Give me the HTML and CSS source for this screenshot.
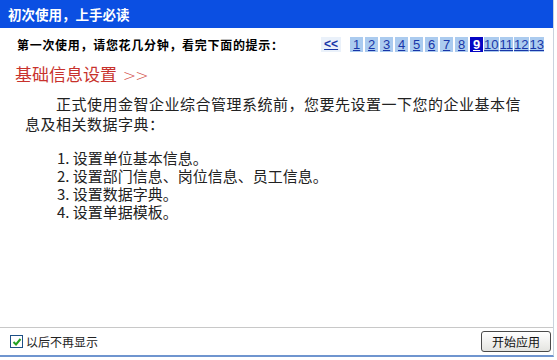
FILE: index.html
```html
<!DOCTYPE html>
<html lang="zh-CN">
  <head>
    <meta charset="UTF-8" />
    <meta name="viewport" content="width=device-width, initial-scale=1.0" />
    <title>初次使用，上手必读</title>
    <link rel="stylesheet" href="styles.css">
  </head>
  <body>
    <div class="window">
      <div class="titlebar">初次使用，上手必读</div>

      <div class="main">
        <div class="guide-row">
          <div class="guide-text">第一次使用，请您花几分钟，看完下面的提示：</div>
          <div class="pager">
            <a class="pager-prev" href="#">&lt;&lt;</a>
            <a class="page" href="#">1</a>
            <a class="page" href="#">2</a>
            <a class="page" href="#">3</a>
            <a class="page" href="#">4</a>
            <a class="page" href="#">5</a>
            <a class="page" href="#">6</a>
            <a class="page" href="#">7</a>
            <a class="page" href="#">8</a>
            <a class="page page_active" href="#">9</a>
            <a class="page page_wide" href="#">10</a>
            <a class="page page_wide" href="#">11</a>
            <a class="page page_wide" href="#">12</a>
            <a class="page page_wide" href="#">13</a>
          </div>
        </div>

        <h2 class="section-title">基础信息设置 <span class="arrows">&gt;&gt;</span></h2>

        <p class="intro">正式使用金智企业综合管理系统前，您要先设置一下您的企业基本信息及相关数据字典：</p>

        <ol class="steps">
          <li>1. 设置单位基本信息。</li>
          <li>2. 设置部门信息、岗位信息、员工信息。</li>
          <li>3. 设置数据字典。</li>
          <li>4. 设置单据模板。</li>
        </ol>
      </div>

      <div class="footer">
        <label class="check">
          <span class="check-box">
            <svg width="10" height="10" viewBox="0 0 10 10">
              <path d="M1.5 5 L4 7.5 L8.5 2" fill="none" stroke="#21a121" stroke-width="2" />
            </svg>
          </span>
          以后不再显示
        </label>
        <button class="btn-start">开始应用</button>
      </div>
    </div>
  </body>
</html>
```

FILE: styles.css
```css
body {
  margin: 0;
  background: #fff;
  font-family: "Liberation Sans", "Noto Sans CJK SC", sans-serif;
  color: #222;
}

.window {
  width: 554px;
  height: 357px;
  border-right: 1px solid #c9d3de;
  border-bottom: 2px solid #6f95cf;
  display: flex;
  flex-direction: column;
  box-sizing: border-box;
}

.titlebar {
  height: 28px;
  line-height: 28px;
  padding-left: 8px;
  background: #0b4fe2;
  color: #fff;
  font-size: 13.5px;
  font-weight: bold;
  font-family: "Noto Sans CJK SC", sans-serif;
}

.main {
  flex: 1;
}

.guide-row {
  display: flex;
  align-items: center;
  justify-content: space-between;
  height: 18px;
  margin-top: 7px;
  padding-left: 17px;
  padding-right: 9px;
}

.guide-text {
  font-family: "Noto Sans CJK SC", sans-serif;
  font-size: 12px;
  font-weight: bold;
  color: #000;
  letter-spacing: 0.7px;
}

.pager {
  display: flex;
  align-items: center;
  font-size: 13px;
  font-family: "Liberation Sans", sans-serif;
}

.pager a {
  color: #1836a8;
  text-decoration: underline;
}

.pager-prev {
  font-size: 12px;
  font-weight: bold;
  padding: 0 3px;
  margin-right: 7px;
  background: #eaf1fa;
  line-height: 15px;
}

.page {
  display: inline-block;
  min-width: 11px;
  padding: 0 1px;
  margin-left: 2px;
  line-height: 15px;
  text-align: center;
  background: #abcbef;
}

.page_wide {
  margin-left: 1px;
  padding: 0;
}

.page_active {
  background: #0606c4;
  color: #fff !important;
  font-weight: bold;
}

.section-title {
  margin: 10px 0 0 15px;
  font-family: "Noto Sans CJK SC", sans-serif;
  font-size: 17px;
  font-weight: normal;
  line-height: 22px;
  color: #c8322c;
}

.arrows {
  margin-left: 2px;
  font-family: "DejaVu Sans", sans-serif;
  font-size: 16px;
  font-weight: 300;
  letter-spacing: -1px;
  color: #d24a44;
}

.intro {
  margin: 7px 24px 0 25px;
  font-family: "Noto Sans CJK SC", sans-serif;
  font-size: 15px;
  letter-spacing: 0.5px;
  line-height: 20px;
  text-indent: 31px;
  color: #222;
}

.steps {
  list-style: none;
  margin: 15px 0 0 57px;
  padding: 0;
  font-family: "Noto Sans CJK SC", sans-serif;
  font-size: 15px;
  line-height: 18px;
  color: #222;
}

.footer {
  height: 27px;
  border-top: 1px solid #c8c8c8;
  display: flex;
  align-items: center;
  justify-content: space-between;
  padding: 0 2px 0 10px;
}

.check {
  display: flex;
  align-items: center;
  font-family: "Noto Sans CJK SC", sans-serif;
  font-size: 12px;
  color: #222;
}

.check-box {
  display: inline-flex;
  align-items: center;
  justify-content: center;
  width: 11px;
  height: 11px;
  margin-right: 3px;
  border: 1px solid #1d4f86;
  background: #fff;
}

.btn-start {
  width: 70px;
  height: 21px;
  padding: 0;
  border: 1px solid #4a4a4a;
  border-radius: 3px;
  background: linear-gradient(#ffffff, #e4e4e0);
  font-family: "Noto Sans CJK SC", sans-serif;
  font-size: 12px;
  color: #111;
}
```
